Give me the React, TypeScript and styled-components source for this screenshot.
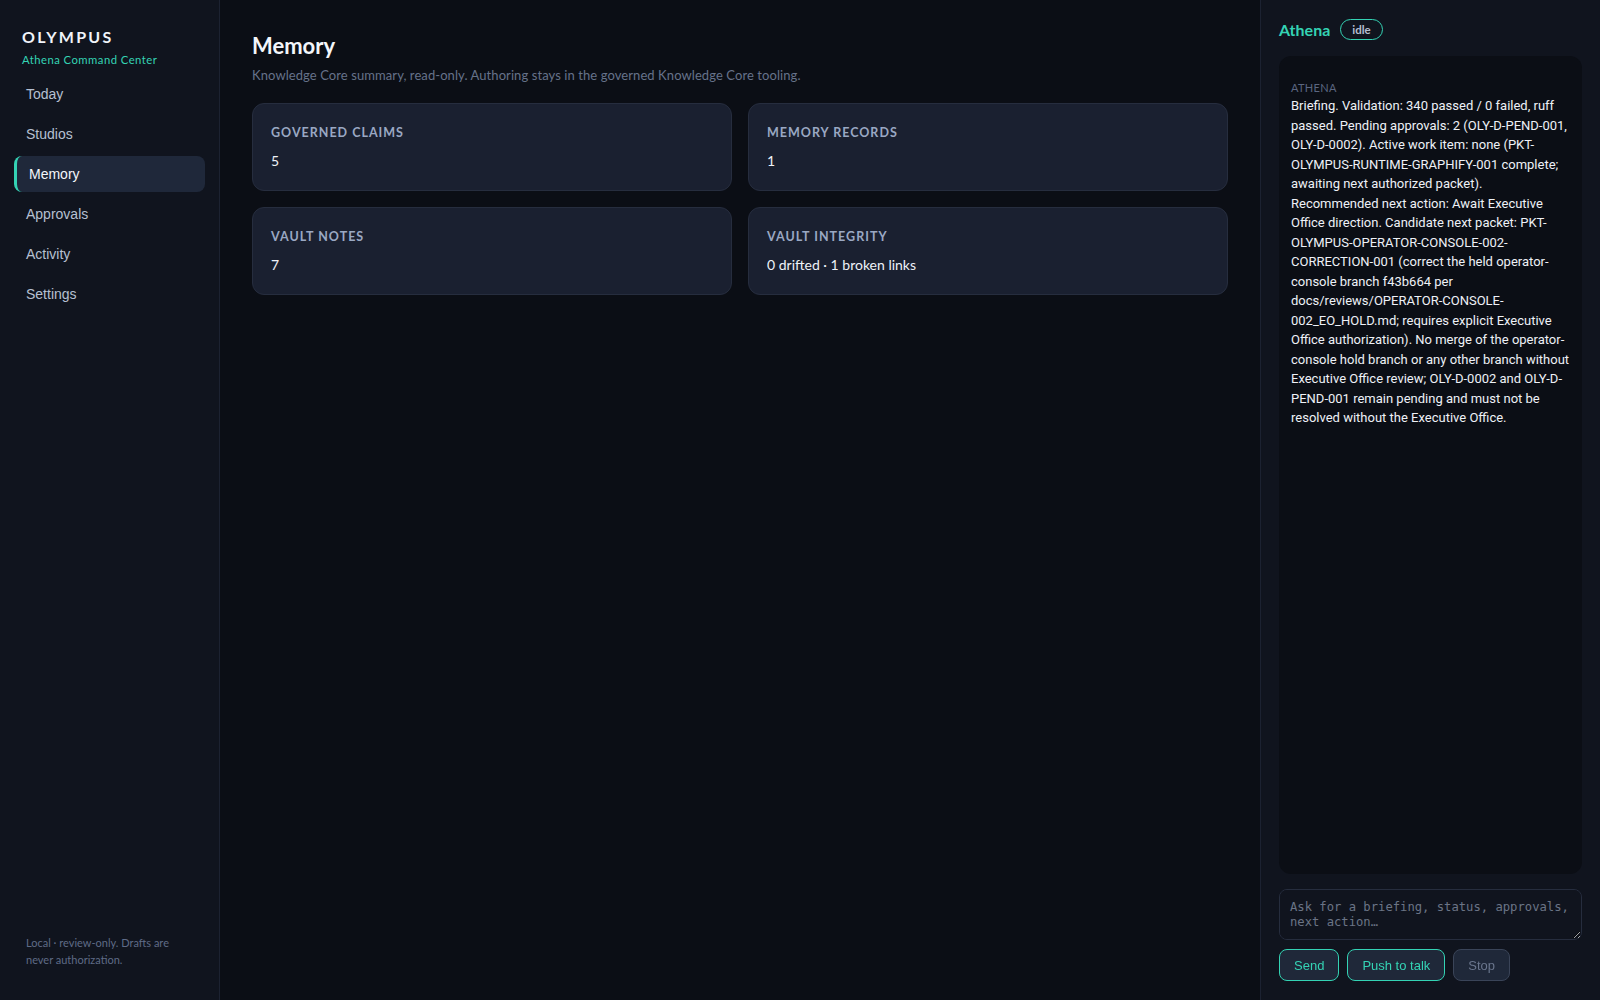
import styled, {createGlobalStyle} from 'styled-components'

const GlobalStyle = createGlobalStyle`
  html, body {
    margin: 0;
    padding: 0;
    background: #0b0e15;
  }
  * {
    box-sizing: border-box;
  }
`

const UI_FONT = `Lato, 'Noto Sans', sans-serif`
const TEAL = '#34d3b4'

const Shell = styled.div`
  display: flex;
  height: 1000px;
  width: 1600px;
  background: #0b0e15;
  font-family: ${UI_FONT};
  color: #e6ebf4;
  overflow: hidden;
`

const Sidebar = styled.aside`
  width: 220px;
  flex-shrink: 0;
  display: flex;
  flex-direction: column;
  background: #10141e;
  border-right: 1px solid #1c2231;
  padding: 27px 14px 32px;
`

const Brand = styled.div`
  padding: 0 8px;
  margin-bottom: 9px;
`

const BrandName = styled.div`
  font-size: 16px;
  font-weight: 700;
  letter-spacing: 0.14em;
  color: #f1f4fa;
  line-height: 20px;
`

const BrandSub = styled.div`
  margin-top: 6px;
  font-size: 11.3px;
  letter-spacing: 0.04em;
  color: ${TEAL};
  line-height: 14px;
`

const Nav = styled.nav`
  display: flex;
  flex-direction: column;
  gap: 4px;
`

const NavItem = styled.a<{$active?: boolean}>`
  display: flex;
  align-items: center;
  height: 36px;
  border-radius: 8px;
  font-family: 'Liberation Sans', Arial, sans-serif;
  font-size: 14px;
  color: ${p => (p.$active ? '#f3f6fb' : '#b6c0d2')};
  background: ${p => (p.$active ? '#1f283a' : 'transparent')};
  border-left: 3px solid ${p => (p.$active ? TEAL : 'transparent')};
  padding-left: ${p => (p.$active ? '12px' : '9px')};
  cursor: pointer;
`

const SidebarFoot = styled.div`
  margin-top: auto;
  padding: 0 12px;
  max-width: 180px;
  font-size: 11px;
  line-height: 17px;
  color: #5f6b86;
  box-sizing: content-box;
`

const Main = styled.main`
  flex: 1;
  padding: 30px 32px;
  min-width: 0;
`

const Title = styled.h1`
  margin: 0;
  font-size: 22px;
  font-weight: 700;
  line-height: 32px;
  color: #f4f6fb;
`

const Subtitle = styled.p`
  margin: 4px 0 19px;
  font-size: 13px;
  letter-spacing: 0.08px;
  line-height: 18px;
  color: #66728a;
`

const CardGrid = styled.div`
  display: grid;
  grid-template-columns: 1fr 1fr;
  gap: 16px;
`

const Card = styled.div`
  height: 88px;
  padding: 17px 18px;
  background: #1a2030;
  border: 1px solid #262d3e;
  border-radius: 12px;
`

const CardLabel = styled.div`
  font-size: 12.5px;
  font-weight: 700;
  letter-spacing: 0.08em;
  text-transform: uppercase;
  color: #9aa8c3;
  line-height: 24px;
`

const CardValue = styled.div`
  margin-top: 6px;
  font-size: 14px;
  line-height: 20px;
  color: #eef2f8;
`

const Panel = styled.aside`
  width: 340px;
  flex-shrink: 0;
  display: flex;
  flex-direction: column;
  background: #10141e;
  border-left: 1px solid #1c2231;
  padding: 18px 18px 19px;
`

const PanelHeader = styled.div`
  display: flex;
  align-items: center;
  gap: 10px;
  height: 22px;
  margin-bottom: 16px;
`

const PanelTitle = styled.div`
  font-size: 16px;
  font-weight: 700;
  color: ${TEAL};
`

const StatusPill = styled.span`
  display: inline-flex;
  align-items: center;
  height: 21px;
  padding: 0 11px;
  border: 1px solid ${TEAL};
  border-radius: 999px;
  font-size: 11.5px;
  font-weight: 700;
  color: #b3bdd0;
`

const Transcript = styled.div`
  flex: 1;
  background: #0b0e15;
  border-radius: 12px;
  padding: 25px 9.3px 12px 12px;
`

const Speaker = styled.div`
  font-size: 11px;
  letter-spacing: 0.03em;
  line-height: 14px;
  color: #5b6680;
  margin-bottom: 1px;
`

const Message = styled.div`
  font-family: Roboto, ${UI_FONT};
  font-size: 13px;
  line-height: 19.5px;
  color: #eef1f7;
`

const Composer = styled.textarea`
  display: block;
  margin-top: 15px;
  width: 100%;
  height: 51px;
  padding: 10px 10px;
  background: #10141e;
  border: 1px solid #262d3e;
  border-radius: 8px;
  font-family: 'DejaVu Sans Mono', 'Liberation Mono', monospace;
  font-size: 12.2px;
  line-height: 15px;
  color: #dfe4ee;
  resize: vertical;
  outline: none;

  &::placeholder {
    color: #6b7486;
  }
`

const ButtonRow = styled.div`
  display: flex;
  gap: 8px;
  margin-top: 9px;
`

const Button = styled.button<{$muted?: boolean}>`
  height: 32px;
  padding: 0 14px;
  background: #1f2839;
  border: 1px solid ${p => (p.$muted ? '#3a4458' : TEAL)};
  border-radius: 8px;
  font-family: 'Liberation Sans', Arial, sans-serif;
  font-size: 13px;
  color: ${p => (p.$muted ? '#6a768d' : TEAL)};
  cursor: pointer;
`

const NAV = ['Today', 'Studios', 'Memory', 'Approvals', 'Activity', 'Settings']

const CARDS = [
  {label: 'Governed claims', value: '5'},
  {label: 'Memory records', value: '1'},
  {label: 'Vault notes', value: '7'},
  {label: 'Vault integrity', value: '0 drifted · 1 broken links'},
]

const BRIEFING =
  'Briefing. Validation: 340 passed / 0 failed, ruff passed. Pending approvals: 2 (OLY-D-PEND-001, OLY-D-0002). Active work item: none (PKT-OLYMPUS-RUNTIME-GRAPHIFY-001 complete; awaiting next authorized packet). Recommended next action: Await Executive Office direction. Candidate next packet: PKT-OLYMPUS-OPERATOR-CONSOLE-002-CORRECTION-001 (correct the held operator-console branch f43b664 per docs/reviews/OPERATOR-CONSOLE-002_EO_HOLD.md; requires explicit Executive Office authorization). No merge of the operator-console hold branch or any other branch without Executive Office review; OLY-D-0002 and OLY-D-PEND-001 remain pending and must not be resolved without the Executive Office.'

const App = () => {
  return (
    <>
      <GlobalStyle />
      <Shell>
        <Sidebar>
          <Brand>
            <BrandName>OLYMPUS</BrandName>
            <BrandSub>Athena Command Center</BrandSub>
          </Brand>
          <Nav>
            {NAV.map(item => (
              <NavItem key={item} $active={item === 'Memory'}>
                {item}
              </NavItem>
            ))}
          </Nav>
          <SidebarFoot>Local · review-only. Drafts are never authorization.</SidebarFoot>
        </Sidebar>

        <Main>
          <Title>Memory</Title>
          <Subtitle>Knowledge Core summary, read-only. Authoring stays in the governed Knowledge Core tooling.</Subtitle>
          <CardGrid>
            {CARDS.map(card => (
              <Card key={card.label}>
                <CardLabel>{card.label}</CardLabel>
                <CardValue>{card.value}</CardValue>
              </Card>
            ))}
          </CardGrid>
        </Main>

        <Panel>
          <PanelHeader>
            <PanelTitle>Athena</PanelTitle>
            <StatusPill>idle</StatusPill>
          </PanelHeader>
          <Transcript>
            <Speaker>ATHENA</Speaker>
            <Message>{BRIEFING}</Message>
          </Transcript>
          <Composer placeholder="Ask for a briefing, status, approvals, next action…" />
          <ButtonRow>
            <Button>Send</Button>
            <Button>Push to talk</Button>
            <Button $muted>Stop</Button>
          </ButtonRow>
        </Panel>
      </Shell>
    </>
  )
}

export default App
